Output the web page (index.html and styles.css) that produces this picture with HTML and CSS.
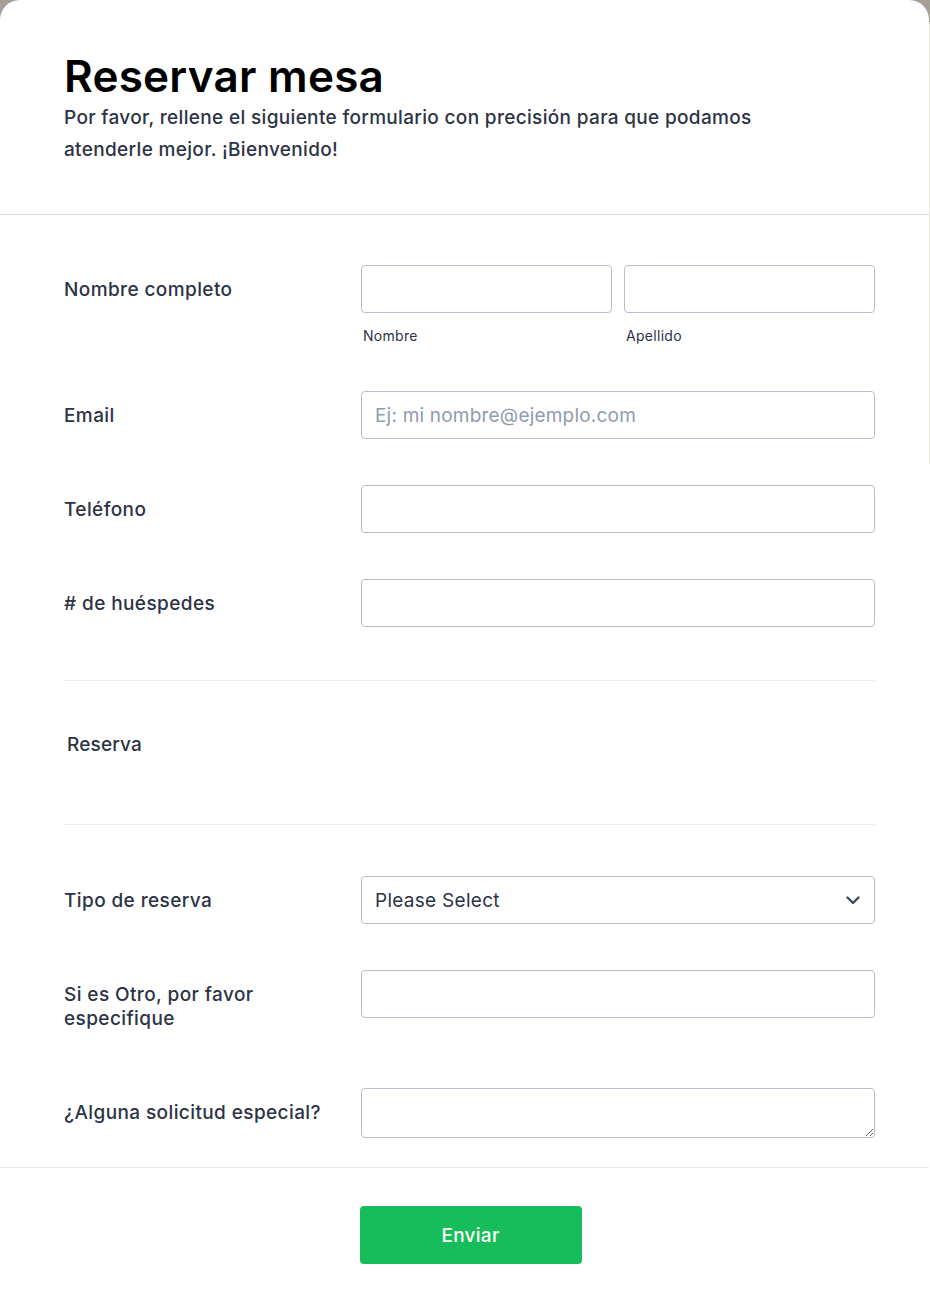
FILE: index.html
```html
<!DOCTYPE html>
<html lang="es">
<head>
<meta charset="utf-8">
<title>Reservar mesa</title>
<link rel="stylesheet" href="styles.css">
</head>
<body>
<main class="card">
  <header class="form-header">
    <h1 class="title">Reservar mesa</h1>
    <p class="subtitle">Por favor, rellene el siguiente formulario con precisión para que podamos atenderle mejor. ¡Bienvenido!</p>
  </header>

  <section class="form-body">
    <div class="row">
      <label class="label">Nombre completo</label>
      <div class="field split">
        <div class="part">
          <input class="input" type="text">
          <span class="sublabel">Nombre</span>
        </div>
        <div class="part">
          <input class="input" type="text">
          <span class="sublabel">Apellido</span>
        </div>
      </div>
    </div>

    <div class="row">
      <label class="label">Email</label>
      <div class="field"><input class="input" type="email" placeholder="Ej: mi nombre@ejemplo.com"></div>
    </div>

    <div class="row">
      <label class="label">Teléfono</label>
      <div class="field"><input class="input" type="tel"></div>
    </div>

    <div class="row last-before-section">
      <label class="label">&#35; de huéspedes</label>
      <div class="field"><input class="input" type="text"></div>
    </div>

    <div class="section-head">
      <h2 class="section-title">Reserva</h2>
    </div>

    <div class="row">
      <label class="label">Tipo de reserva</label>
      <div class="field">
        <div class="select">
          <span class="select-text">Please Select</span>
          <svg class="chevron" width="14" height="9" viewBox="0 0 14 9"><path d="M1.5 1.5 L7 7 L12.5 1.5" fill="none" stroke="#3e4a63" stroke-width="2.4" stroke-linecap="round" stroke-linejoin="round"/></svg>
        </div>
      </div>
    </div>

    <div class="row">
      <label class="label">Si es Otro, por favor<br>especifique</label>
      <div class="field"><input class="input" type="text"></div>
    </div>

    <div class="row final">
      <label class="label">¿Alguna solicitud especial?</label>
      <div class="field"><textarea class="textarea"></textarea></div>
    </div>
  </section>

  <footer class="form-footer">
    <button class="submit" type="button">Enviar</button>
  </footer>
</main>
</body>
</html>
```

FILE: styles.css
```css
* { box-sizing: border-box; }

html, body {
  margin: 0;
  padding: 0;
  height: 100%;
}

body {
  background: linear-gradient(to bottom, #a69f97 0, #a69f97 22px, #ece6df 22px, #ece6df 464px, #ffffff 464px);
  font-family: "Inter", "Noto Sans", sans-serif;
  color: #2c3345;
}

.card {
  background: #ffffff;
  border-radius: 20px 20px 0 0;
  min-height: 1315px;
  width: 929px;
}

.form-header {
  padding: 50px 55px 48px 64px;
  border-bottom: 1px solid #d6d8e8;
}

.title {
  margin: 0;
  font-size: 44px;
  line-height: 52px;
  font-weight: 600;
  color: #000000;
  letter-spacing: 0.25px;
}

.subtitle {
  margin: 0;
  max-width: 720px;
  font-size: 19px;
  line-height: 32px;
  font-weight: 500;
  letter-spacing: 0.33px;
  color: #2c3345;
}

.form-body {
  padding: 50px 54px 29px 64px;
  border-bottom: 1px solid #e6e8f0;
}

.row {
  display: flex;
  align-items: flex-start;
  margin-bottom: 46px;
}

.row.final { margin-bottom: 0; }

.row.last-before-section { margin-bottom: 53px; }

.label {
  width: 297px;
  flex: none;
  padding: 13px 0 11px;
  font-size: 19px;
  line-height: 24px;
  font-weight: 500;
  letter-spacing: 0.4px;
  color: #2c3345;
}

.field {
  flex: 1;
  min-width: 0;
}

.split {
  display: flex;
  gap: 12px;
}

.part {
  flex: 1;
  display: flex;
  flex-direction: column;
}

.sublabel {
  margin-top: 14px;
  padding-left: 2px;
  font-size: 14px;
  line-height: 18px;
  letter-spacing: 0.3px;
  color: #2c3345;
}

.input {
  display: block;
  width: 100%;
  height: 48px;
  border: 1px solid #b8bdc9;
  border-radius: 4px;
  padding: 0 13px;
  font-family: inherit;
  font-size: 19px;
  letter-spacing: 0.2px;
  color: #2c3345;
  background: #ffffff;
  outline: none;
}

.input::placeholder {
  color: #8f9bb0;
}

.section-head {
  border-top: 1px solid #eceef4;
  border-bottom: 1px solid #eceef4;
  height: 145px;
  padding: 52px 0 0 3px;
  margin-bottom: 51px;
}

.section-title {
  margin: 0;
  font-size: 19px;
  line-height: 24px;
  font-weight: 500;
  letter-spacing: 0.15px;
  color: #2c3345;
}

.select {
  height: 48px;
  border: 1px solid #b8bdc9;
  border-radius: 4px;
  padding: 0 14px 0 13px;
  display: flex;
  align-items: center;
  justify-content: space-between;
  background: #ffffff;
}

.select-text {
  font-size: 19px;
  letter-spacing: 0.28px;
  color: #2c3345;
}

.chevron {
  display: block;
  margin-top: 1px;
}

.textarea {
  display: block;
  width: 100%;
  height: 50px;
  border: 1px solid #b8bdc9;
  border-radius: 4px;
  padding: 10px 13px;
  font-family: inherit;
  font-size: 19px;
  color: #2c3345;
  background: #ffffff;
  resize: vertical;
  outline: none;
}

.form-footer {
  padding: 38px 0 0;
  display: flex;
  justify-content: center;
}

.submit {
  width: 222px;
  height: 58px;
  margin-left: 12px;
  border: none;
  border-radius: 4px;
  background: #18bd5b;
  color: #ffffff;
  font-family: inherit;
  font-size: 19px;
  font-weight: 500;
  letter-spacing: 0.3px;
  cursor: pointer;
}
```
